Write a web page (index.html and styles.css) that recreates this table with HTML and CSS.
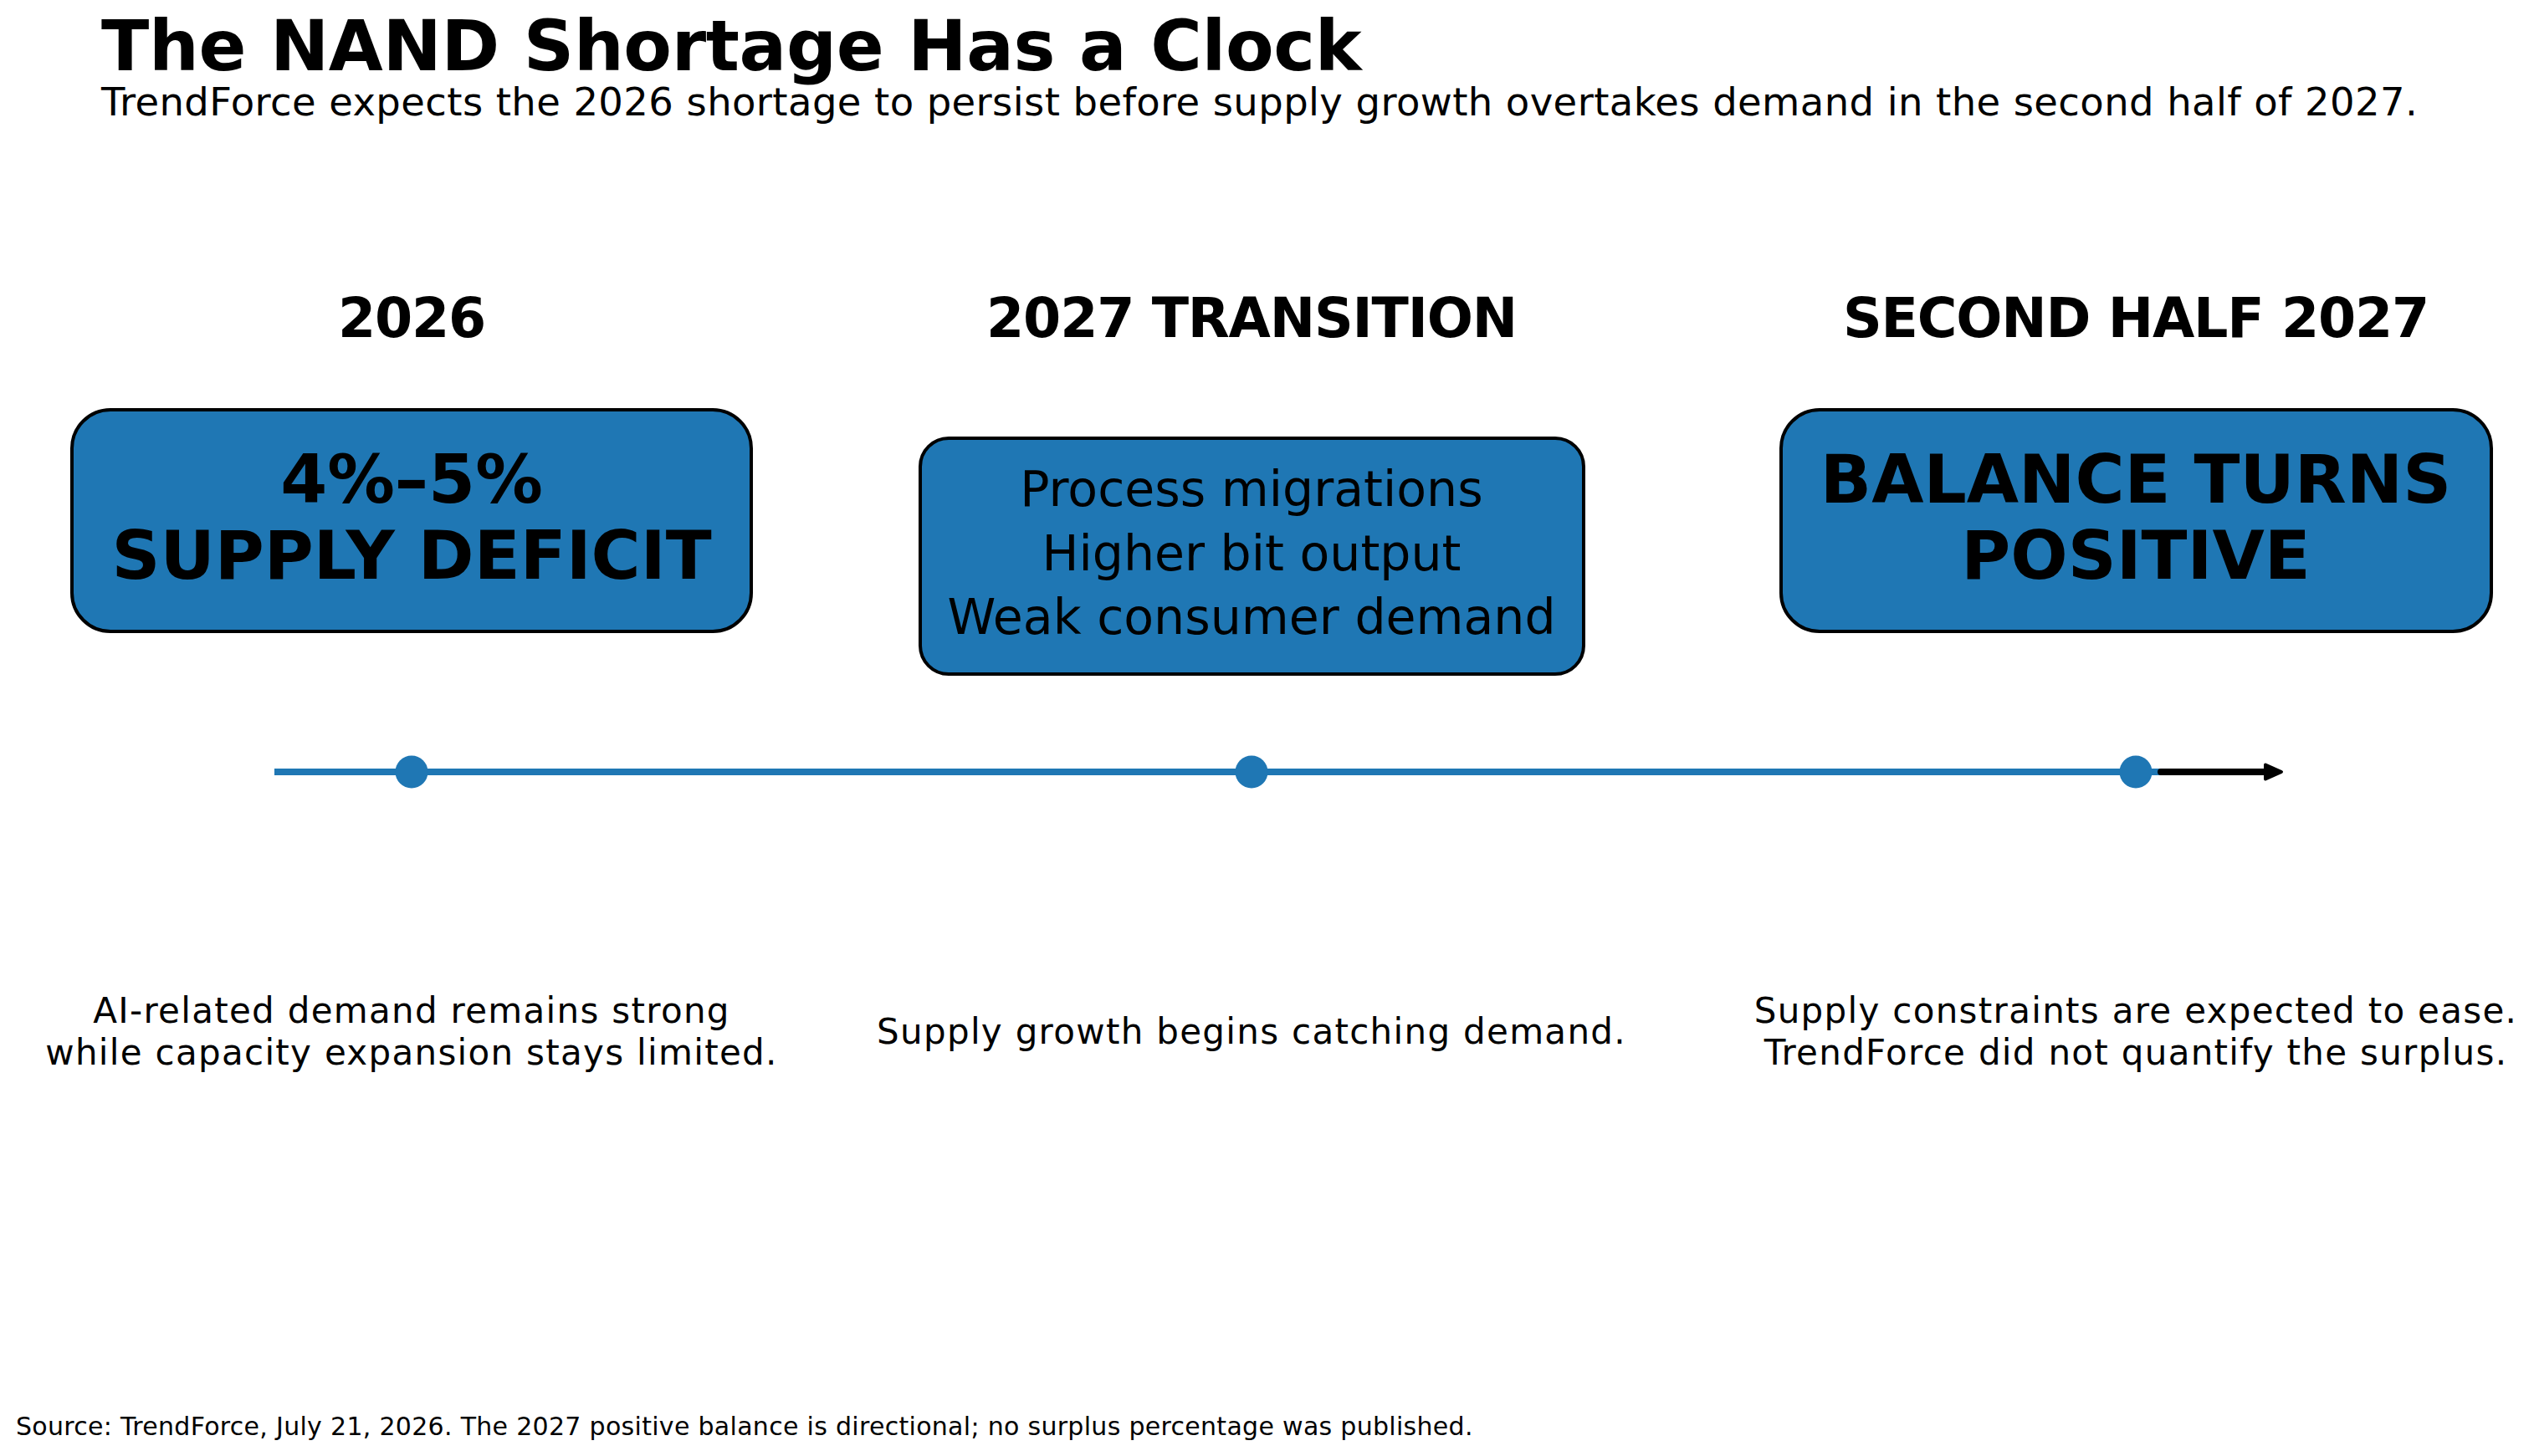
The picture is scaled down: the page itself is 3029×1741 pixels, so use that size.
FILE: index.html
```html
<!DOCTYPE html>
<html lang="en">
<head>
<meta charset="utf-8">
<title>The NAND Shortage Has a Clock</title>
<link rel="stylesheet" href="styles.css">
</head>
<body>
<div class="page">
  <header class="head">
    <h1 class="title">The NAND Shortage Has a Clock</h1>
    <p class="subtitle">TrendForce expects the 2026 shortage to persist before supply growth overtakes demand in the second half of 2027.</p>
  </header>

  <main class="stage">
    <h2 class="phase c1">2026</h2>
    <h2 class="phase c2">2027 TRANSITION</h2>
    <h2 class="phase c3">SECOND HALF 2027</h2>

    <div class="cell c1"><div class="box box-big box-a">4%–5%<br>SUPPLY DEFICIT</div></div>
    <div class="cell c2"><div class="box box-list">Process migrations<br>Higher bit output<br>Weak consumer demand</div></div>
    <div class="cell c3"><div class="box box-big box-c">BALANCE TURNS<br>POSITIVE</div></div>

    <svg class="timeline" viewBox="0 0 3029 40" width="3029" height="40" aria-hidden="true">
      <line x1="328" y1="20" x2="2583" y2="20" stroke="#1f77b4" stroke-width="8"/>
      <circle cx="492" cy="20" r="19.5" fill="#1f77b4"/>
      <circle cx="1496" cy="20" r="19.5" fill="#1f77b4"/>
      <circle cx="2553" cy="20" r="19.5" fill="#1f77b4"/>
      <line x1="2583" y1="20" x2="2712" y2="20" stroke="#000" stroke-width="8" stroke-linecap="round"/>
      <path d="M2708 11.5 L2727 20 L2708 28.5 Z" fill="#000" stroke="#000" stroke-width="4" stroke-linejoin="round"/>
    </svg>

    <p class="desc c1">AI-related demand remains strong<br>while capacity expansion stays limited.</p>
    <p class="desc c2">Supply growth begins catching demand.</p>
    <p class="desc c3">Supply constraints are expected to ease.<br>TrendForce did not quantify the surplus.</p>
  </main>

  <footer class="source">Source: TrendForce, July 21, 2026. The 2027 positive balance is directional; no surplus percentage was published.</footer>
</div>
</body>
</html>
```
FILE: styles.css
```css
html, body {
  margin: 0;
  padding: 0;
  background: #ffffff;
  overflow: hidden;
}
body {
  font-family: "DejaVu Sans", "Liberation Sans", sans-serif;
  color: #000;
}
.page {
  width: 3029px;
  height: 1741px;
  display: flex;
  flex-direction: column;
  box-sizing: border-box;
}
.head {
  padding: 13px 0 0 121px;
}
.title {
  margin: 0;
  font-size: 84px;
  line-height: 84px;
  font-weight: bold;
  letter-spacing: -0.35px;
}
.subtitle {
  margin: 0;
  font-size: 46.5px;
  line-height: 51px;
  font-weight: normal;
  letter-spacing: 0.4px;
}
.stage {
  margin-top: 193px;
  display: grid;
  grid-template-columns: 984px 1024px 1021px;
  align-items: start;
}
.c1 { grid-column: 1; }
.c2 { grid-column: 2; }
.c3 { grid-column: 3; padding-left: 69px; }
.phase {
  margin: 0;
  font-size: 65px;
  line-height: 80px;
  font-weight: bold;
  letter-spacing: -1.2px;
  text-align: center;
}
.cell {
  display: flex;
  justify-content: center;
}
.box {
  box-sizing: border-box;
  background: #1f77b4;
  border: 4px solid #000;
  border-radius: 48px;
  text-align: center;
  color: #000;
}
.box-big {
  margin-top: 67px;
  height: 269px;
  padding-top: 36px;
  font-size: 80.5px;
  line-height: 90.5px;
  font-weight: bold;
}
.box-a { width: 816px; }
.box-c { width: 853px; }
.box-list {
  margin-top: 101px;
  width: 797px;
  height: 286px;
  padding-top: 21px;
  font-size: 58.5px;
  line-height: 76.5px;
  border-radius: 36px;
}
.timeline {
  grid-column: 1 / -1;
  display: block;
  margin-top: 95px;
}
.desc {
  margin: 241px 0 0;
  align-self: center;
  font-size: 42px;
  line-height: 50px;
  letter-spacing: 1.3px;
  text-align: center;
}
.source {
  margin-top: auto;
  padding: 0 0 17px 19px;
  font-size: 30px;
  line-height: 36px;
  letter-spacing: 0.3px;
}
```
